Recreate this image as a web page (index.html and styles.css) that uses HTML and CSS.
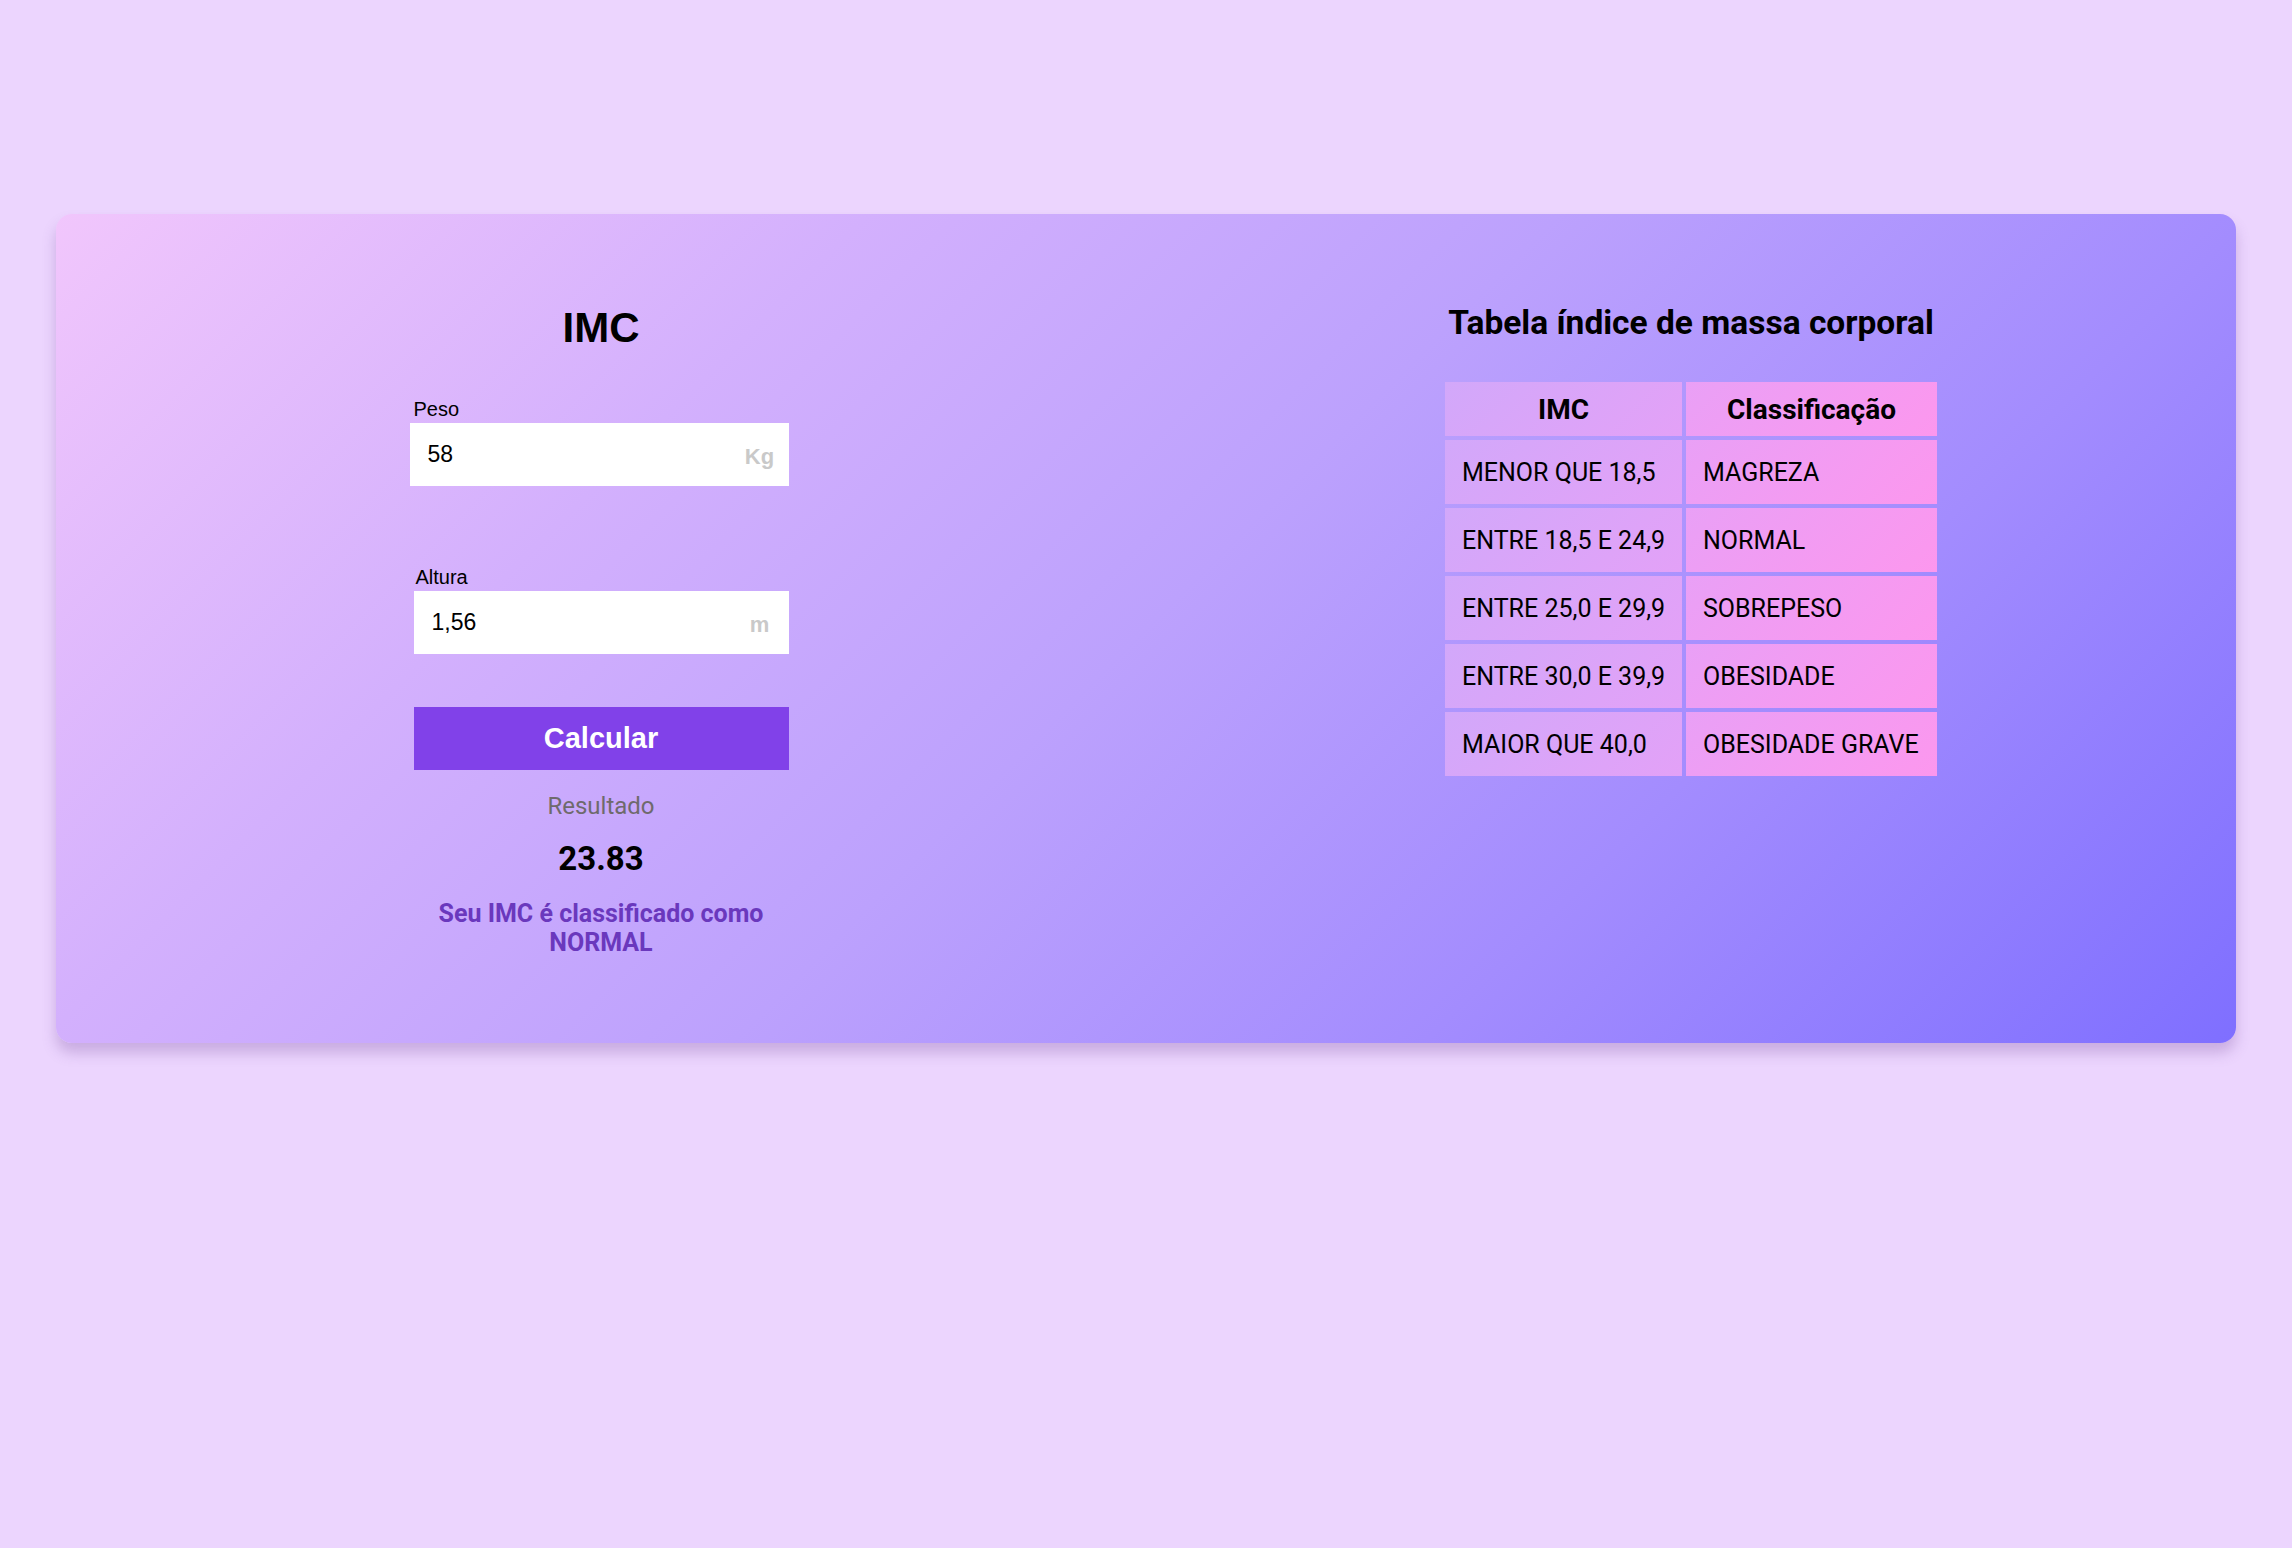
FILE: index.html
```html
<!DOCTYPE html>
<html lang="pt-BR">
<head>
<meta charset="utf-8">
<title>IMC</title>
<link rel="stylesheet" href="styles.css">
</head>
<body>
<main class="card">
  <section class="calc">
    <h1 class="calc-title">IMC</h1>
    <div class="form">
      <label class="field-label" for="peso">Peso</label>
      <div class="field field-peso">
        <input id="peso" class="field-input" type="text" value="58">
        <span class="unit">Kg</span>
      </div>
      <label class="field-label field-label-altura" for="altura">Altura</label>
      <div class="field">
        <input id="altura" class="field-input" type="text" value="1,56">
        <span class="unit">m</span>
      </div>
      <button class="btn" type="button">Calcular</button>
      <p class="result-label">Resultado</p>
      <p class="result-value">23.83</p>
      <p class="result-text">Seu IMC é classificado como NORMAL</p>
    </div>
  </section>
  <section class="ref">
    <h2 class="ref-title">Tabela índice de massa corporal</h2>
    <table class="imc-table">
      <thead>
        <tr><th class="c1">IMC</th><th class="c2">Classificação</th></tr>
      </thead>
      <tbody>
        <tr><td class="c1">MENOR QUE 18,5</td><td class="c2">MAGREZA</td></tr>
        <tr><td class="c1">ENTRE 18,5 E 24,9</td><td class="c2">NORMAL</td></tr>
        <tr><td class="c1">ENTRE 25,0 E 29,9</td><td class="c2">SOBREPESO</td></tr>
        <tr><td class="c1">ENTRE 30,0 E 39,9</td><td class="c2">OBESIDADE</td></tr>
        <tr><td class="c1">MAIOR QUE 40,0</td><td class="c2">OBESIDADE GRAVE</td></tr>
      </tbody>
    </table>
  </section>
</main>
</body>
</html>
```

FILE: styles.css
```css
* { box-sizing: border-box; }

html, body {
  margin: 0;
  padding: 0;
}

body {
  background: #ecd5fe;
  font-family: Roboto, "Liberation Sans", sans-serif;
  color: #000;
  padding: 214px 56px 0;
  min-height: 1548px;
}

.card {
  display: grid;
  grid-template-columns: 1fr 1fr;
  height: 829px;
  border-radius: 16px;
  background: linear-gradient(135deg, #f1c6fc 0%, #d3b0fd 27%, #bca1fd 50%, #a38cfe 73%, #7f6fff 100%);
  box-shadow: 0 10px 14px rgba(110, 70, 150, 0.28);
}

/* left column */
.calc {
  display: flex;
  flex-direction: column;
  align-items: center;
  padding-top: 89px;
}

.calc-title {
  margin: 0;
  font-family: "Liberation Sans", Arial, sans-serif;
  font-weight: bold;
  font-size: 42px;
  line-height: 50px;
}

.form {
  width: 375px;
  display: flex;
  flex-direction: column;
  margin-top: 44px;
}

.field-label {
  font-family: "Liberation Sans", Arial, sans-serif;
  font-size: 20px;
  line-height: 24px;
  height: 24px;
  margin-bottom: 2px;
}

.field-label-altura {
  margin-top: 79px;
  padding-left: 2px;
}

.field {
  display: flex;
  align-items: center;
  height: 63px;
  background: #fff;
  padding: 0 9px 0 18px;
}

.field-peso {
  margin-left: -4px;
}

.field-input {
  flex: 1;
  min-width: 0;
  border: 0;
  outline: none;
  background: transparent;
  padding: 0;
  font-family: "Liberation Sans", Arial, sans-serif;
  font-size: 23px;
  color: #000;
}

.unit {
  width: 40px;
  text-align: center;
  font-family: "Liberation Sans", Arial, sans-serif;
  font-weight: bold;
  font-size: 22px;
  color: #c9c9c9;
  padding-top: 4px;
}

.btn {
  margin-top: 53px;
  height: 63px;
  border: 0;
  background: #8141e9;
  color: #fff;
  font-family: "Liberation Sans", Arial, sans-serif;
  font-weight: bold;
  font-size: 29px;
  cursor: pointer;
}

.result-label {
  margin: 22px 0 0;
  text-align: center;
  font-size: 24px;
  line-height: 28px;
  color: #6f6a6c;
}

.result-value {
  margin: 19px 0 0;
  text-align: center;
  font-weight: bold;
  font-size: 33px;
  line-height: 40px;
}

.result-text {
  margin: 20px 0 0;
  text-align: center;
  font-weight: bold;
  font-size: 25px;
  line-height: 29px;
  color: #6a38bd;
}

/* right column */
.ref {
  display: flex;
  flex-direction: column;
  align-items: center;
  padding-top: 90px;
}

.ref-title {
  margin: 0;
  font-weight: bold;
  font-size: 33.5px;
  line-height: 38px;
}

.imc-table {
  margin-top: 36px;
  border-collapse: separate;
  border-spacing: 4px;
  font-size: 25px;
}

.imc-table th,
.imc-table td {
  padding: 0 0 0 17px;
  text-align: left;
  vertical-align: middle;
  font-weight: normal;
}

.imc-table th {
  height: 54px;
  padding: 0;
  text-align: center;
  font-weight: bold;
  font-size: 28px;
}

.imc-table td {
  height: 64px;
}

.imc-table .c1 {
  width: 237px;
  background: linear-gradient(135deg, #d2a8fa, #e3a1f7);
}

.imc-table .c2 {
  width: 251px;
  background: linear-gradient(135deg, #e9a0f6, #fc97ee);
}
```
